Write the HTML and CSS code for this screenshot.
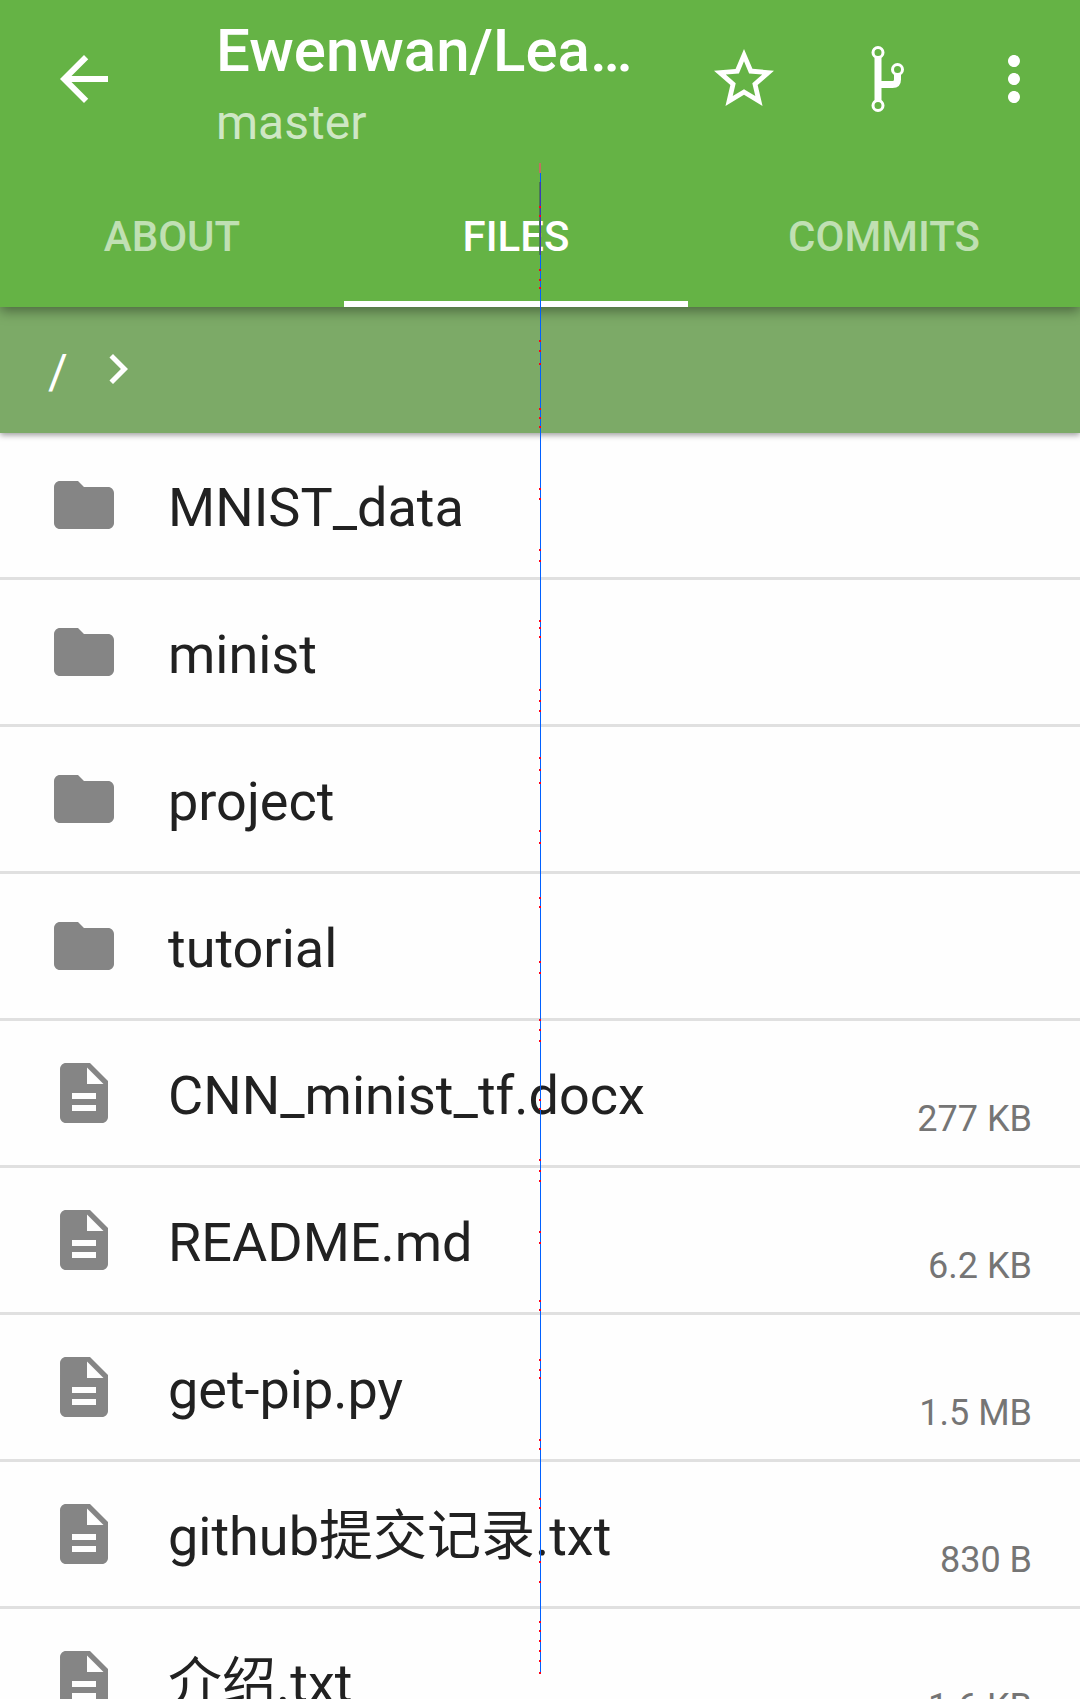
FILE: index.html
```
<!DOCTYPE html>
<html lang="en">
<head>
<meta charset="utf-8">
<meta name="viewport" content="width=device-width, initial-scale=1">
<title>Ewenwan – Files</title>
<link rel="stylesheet" href="styles.css">
</head>
<body>
<svg class="symbols" aria-hidden="true">
  <symbol id="folder" viewBox="0 0 24 24"><path d="M10 4H4c-1.1 0-1.99.9-1.99 2L2 18c0 1.1.9 2 2 2h16c1.100 0 2-.9 2-2V8c0-1.100-.9-2-2-2h-8l-2-2z"/></symbol>
  <symbol id="file" viewBox="0 0 24 24"><path d="M14 2H6c-1.100 0-1.990.9-1.990 2L4 20c0 1.100.890 2 1.990 2H18c1.100 0 2-.9 2-2V8l-6-6zm2 16H8v-2h8v2zm0-4H8v-2h8v2zm-3-5V3.500L18.500 9H13z"/></symbol>
</svg>
<div class="app">
  <header class="header">
    <div class="toolbar">
      <button class="icon-button back" type="button" aria-label="Back"><svg class="icon" viewBox="0 0 24 24"><path d="M20 11H7.830l5.590-5.590L12 4l-8 8 8 8 1.410-1.410L7.830 13H20v-2z"/></svg></button>
      <div class="heading">
        <h1 class="title">Ewenwan/Lea…</h1>
        <p class="subtitle">master</p>
      </div>
      <button class="icon-button" type="button" aria-label="Star"><svg class="icon" viewBox="0 0 24 24"><path d="M22 9.240l-7.190-.62L12 2 9.190 8.630 2 9.240l5.460 4.730L5.820 21 12 17.270 18.180 21l-1.630-7.030L22 9.240zM12 15.400l-3.760 2.270 1-4.280-3.320-2.880 4.380-.38L12 6.100l1.710 4.040 4.380.38-3.320 2.880 1 4.280L12 15.400z"/></svg></button>
      <button class="icon-button" type="button" aria-label="Fork"><svg class="icon fork" viewBox="0 0 72 72"><path class="fork-line" d="M26 14.500V58M26 41.500h14.500q5 0 5-5V31"/><circle cx="26" cy="9.500" r="5"/><circle cx="26" cy="62.500" r="5"/><circle cx="45.500" cy="26.500" r="5"/></svg></button>
      <button class="icon-button more" type="button" aria-label="More options"><svg class="icon" viewBox="0 0 24 24"><path d="M12 8c1.100 0 2-.9 2-2s-.9-2-2-2-2 .9-2 2 .9 2 2 2zm0 2c-1.100 0-2 .9-2 2s.9 2 2 2 2-.9 2-2-.9-2-2-2zm0 6c-1.100 0-2 .9-2 2s.9 2 2 2 2-.9 2-2-.9-2-2-2z"/></svg></button>
    </div>
    <nav class="tabs" aria-label="Repository">
      <a class="tab" href="#about">ABOUT</a>
      <a class="tab tab-active" href="#files" aria-current="page">FILES</a>
      <a class="tab" href="#commits">COMMITS</a>
    </nav>
  </header>
  <nav class="breadcrumb" aria-label="Path">
    <a class="crumb" href="#root">/</a>
    <svg class="chevron" viewBox="0 0 24 24" aria-hidden="true"><path d="M10 6L8.590 7.410 13.170 12l-4.580 4.590L10 18l6-6z"/></svg>
  </nav>
  <main>
    <ul class="files">
      <li><a class="row" href="#f1"><svg class="icon"><use href="#folder"/></svg><span class="name">MNIST_data</span></a></li>
      <li><a class="row" href="#f2"><svg class="icon"><use href="#folder"/></svg><span class="name">minist</span></a></li>
      <li><a class="row" href="#f3"><svg class="icon"><use href="#folder"/></svg><span class="name">project</span></a></li>
      <li><a class="row" href="#f4"><svg class="icon"><use href="#folder"/></svg><span class="name">tutorial</span></a></li>
      <li><a class="row" href="#f5"><svg class="icon"><use href="#file"/></svg><span class="name">CNN_minist_tf.docx</span><span class="size">277 KB</span></a></li>
      <li><a class="row" href="#f6"><svg class="icon"><use href="#file"/></svg><span class="name">README.md</span><span class="size">6.2 KB</span></a></li>
      <li><a class="row" href="#f7"><svg class="icon"><use href="#file"/></svg><span class="name">get-pip.py</span><span class="size">1.5 MB</span></a></li>
      <li><a class="row" href="#f8"><svg class="icon"><use href="#file"/></svg><span class="name">github提交记录.txt</span><span class="size">830 B</span></a></li>
      <li><a class="row" href="#f9"><svg class="icon"><use href="#file"/></svg><span class="name">介绍.txt</span><span class="size">1.6 KB</span></a></li>
    </ul>
  </main>
  <svg class="trace" viewBox="0 0 2 1699" shape-rendering="crispEdges" aria-hidden="true">
    <path fill="#c0715f" d="M0 163h2v10H0z"/>
    <path fill="#4d7a50" d="M0 182h1v73H0z"/>
    <path fill="#0060ff" d="M1 173h1v1500H1z"/>
    <path fill="#3b3bb8" d="M1 182h1v73H1z"/>
    <path stroke="#ff0018" stroke-width="2" d="M0 207h2M0 216h2M0 270h2M0 280h2M0 288h2M0 341h2M0 351h2M0 364h2M0 409h2M0 418h2M0 427h2M0 489h2M0 499h2M0 550h2M0 561h2M0 621h2M0 628h2M0 637h2M0 690h2M0 701h2M0 711h2M0 758h2M0 770h2M0 783h2M0 831h2M0 843h2M0 898h2M0 907h2M0 962h2M0 973h2M0 1020h2M0 1030h2M0 1041h2M0 1100h2M0 1109h2M0 1160h2M0 1171h2M0 1181h2M0 1232h2M0 1243h2M0 1301h2M0 1310h2M0 1360h2M0 1370h2M0 1378h2M0 1440h2M0 1449h2M0 1499h2M0 1508h2M0 1562h2M0 1582h2M0 1622h2M0 1631h2M0 1641h2M0 1651h2M0 1661h2M0 1673h2"/>
  </svg>
</div>
</body>
</html>
```
FILE: styles.css
```
* { box-sizing: border-box; }
body {
  margin: 0;
  background: #fefefe;
  color: #212121;
  font-family: Roboto, "Noto Sans CJK SC", sans-serif;
}
a { color: inherit; text-decoration: none; }
.symbols { position: absolute; width: 0; height: 0; }
.app { position: relative; height: 100vh; overflow: hidden; }
.icon { display: block; flex: none; width: 72px; height: 72px; fill: currentColor; }

.header {
  position: relative;
  z-index: 2;
  background: #65b345;
  color: #fff;
  box-shadow: 0 4px 12px rgba(0, 0, 0, 0.4);
}
.toolbar { display: flex; align-items: center; height: 158px; padding-right: 12px; margin-bottom: 5px; }
.icon-button {
  display: flex;
  flex: none;
  align-items: center;
  justify-content: center;
  width: 144px;
  height: 144px;
  padding: 0;
  border: 0;
  background: none;
  color: inherit;
}
.back { width: 168px; }
.more { width: 108px; }
.heading { flex: 1; min-width: 0; padding: 12px 0 0 48px; }
.title { margin: 0 0 4px; font-size: 60px; font-weight: 500; line-height: 72px; white-space: nowrap; }
.subtitle { margin: 0; font-size: 48px; line-height: 64px; color: rgba(255, 255, 255, 0.7); }
.icon.fork { fill: none; stroke: currentColor; stroke-width: 3; }
.fork-line { stroke-width: 7; }

.tabs { display: grid; grid-template-columns: 43fr 43fr 49fr; height: 144px; }
.tab {
  display: flex;
  align-items: center;
  justify-content: center;
  border-top: 8px solid transparent;
  border-bottom: 6px solid transparent;
  color: rgba(255, 255, 255, 0.6);
  font-size: 42px;
  font-weight: 500;
}
.tab-active { border-bottom-color: #fff; color: #fff; }

.breadcrumb {
  position: relative;
  z-index: 1;
  display: flex;
  align-items: center;
  gap: 20px;
  height: 126px;
  padding: 0 48px 2px;
  background: #7caa67;
  color: #fff;
  box-shadow: 0 2px 6px rgba(0, 0, 0, 0.4);
}
.crumb { padding-top: 4px; font-size: 48px; }
.chevron { width: 60px; height: 60px; fill: currentColor; }

.files { margin: 0; padding: 0; list-style: none; }
.row {
  display: flex;
  align-items: center;
  height: 147px;
  padding: 0 48px;
  border-bottom: 3px solid #e0e0e0;
}
.row .icon { color: #858585; }
.name { flex: 1; padding: 6px 0 0 48px; font-size: 54px; line-height: 72px; }
.size { align-self: flex-end; padding-bottom: 22px; color: #757575; font-size: 36px; line-height: 48px; }

/* thin vertical trace drawn over the page */
.trace {
  position: absolute;
  z-index: 3;
  top: 0;
  left: calc(50% - 1px);
  width: 2px;
  height: 1699px;
  pointer-events: none;
}
```
